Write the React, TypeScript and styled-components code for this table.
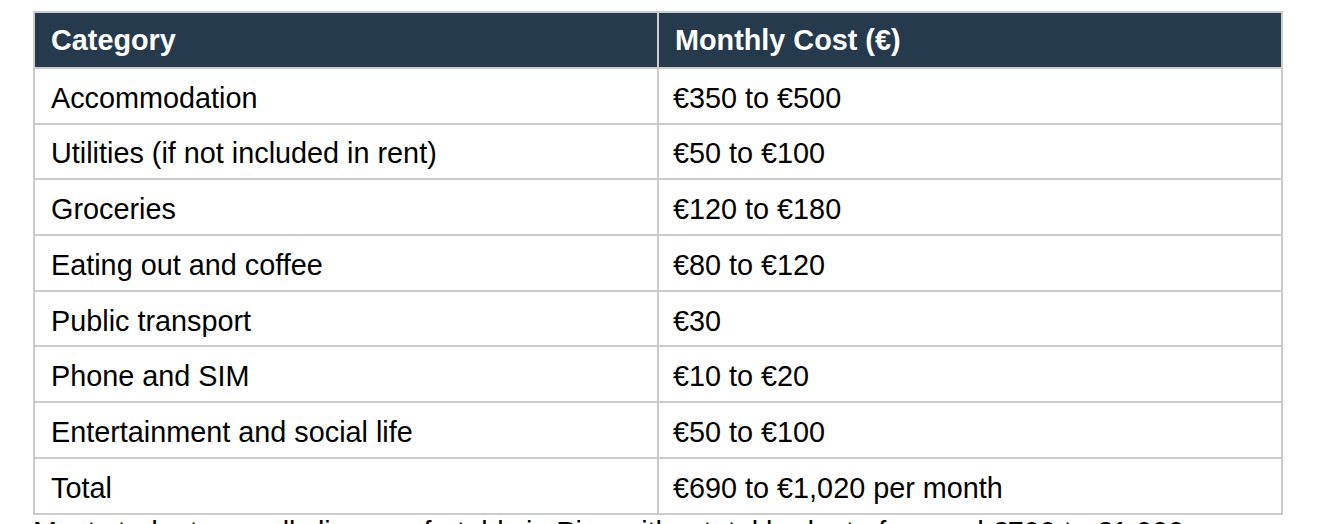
import React from "react";
import styled, { createGlobalStyle } from "styled-components";

const GlobalStyle = createGlobalStyle`
  html, body {
    margin: 0;
    padding: 0;
    background: #ffffff;
  }
  body {
    font-family: "Liberation Sans", Arial, Helvetica, sans-serif;
    color: #000000;
  }
`;

const Page = styled.div`
  width: 1250px;
  padding: 11px 0 0 33px;
`;

const Table = styled.table`
  width: 1250px;
  table-layout: fixed;
  border-collapse: collapse;
  border: 2px solid #cccccc;
  font-size: 28.8px;
  line-height: 1.15;
`;

const HeadCell = styled.th`
  background: #263a4d;
  color: #ffffff;
  font-weight: 700;
  text-align: left;
  height: 56px;
  padding: 2px 15px 0 16px;
  border: 2px solid #cccccc;
  box-sizing: border-box;
`;

const Row = styled.tr`
  height: 55.7px;
`;

const Cell = styled.td<{ $first?: boolean }>`
  padding: 5px 15px 0 ${(p) => (p.$first ? "16px" : "14px")};
  border: 2px solid #cccccc;
  vertical-align: middle;
  white-space: nowrap;
`;

const Note = styled.p`
  margin: 0;
  font-size: 28.8px;
  line-height: 1;
  padding-top: 3px;
`;

const rows: [string, string][] = [
  ["Accommodation", "€350 to €500"],
  ["Utilities (if not included in rent)", "€50 to €100"],
  ["Groceries", "€120 to €180"],
  ["Eating out and coffee", "€80 to €120"],
  ["Public transport", "€30"],
  ["Phone and SIM", "€10 to €20"],
  ["Entertainment and social life", "€50 to €100"],
  ["Total", "€690 to €1,020 per month"],
];

const App = () => {
  return (
    <Page>
      <GlobalStyle />
      <Table>
        <thead>
          <tr>
            <HeadCell>Category</HeadCell>
            <HeadCell>Monthly Cost (€)</HeadCell>
          </tr>
        </thead>
        <tbody>
          {rows.map(([category, cost]) => (
            <Row key={category}>
              <Cell $first>{category}</Cell>
              <Cell>{cost}</Cell>
            </Row>
          ))}
        </tbody>
      </Table>
      <Note>
        Most students usually live comfortably in Pisa with a total budget of
        around €700 to €1,000 per month, depending on lifestyle.
      </Note>
    </Page>
  );
};

export default App;
